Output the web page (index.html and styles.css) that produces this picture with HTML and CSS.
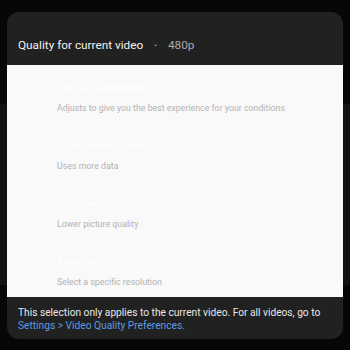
FILE: index.html
```html
<!DOCTYPE html>
<html>
<head>
<meta charset="utf-8">
<link rel="stylesheet" href="styles.css">
</head>
<body>
<div class="dialog">
  <div class="header">
    <span class="title">Quality for current video</span>
    <span class="dot">•</span>
    <span class="current">480p</span>
  </div>
  <div class="list">
    <div class="row">
      <span class="radio"></span>
      <div class="texts">
        <div class="opt">Auto (recommended)</div>
        <div class="sub">Adjusts to give you the best experience for your conditions</div>
      </div>
    </div>
    <div class="row">
      <span class="radio"></span>
      <div class="texts">
        <div class="opt">Higher picture quality</div>
        <div class="sub">Uses more data</div>
      </div>
    </div>
    <div class="row">
      <span class="radio"></span>
      <div class="texts">
        <div class="opt">Data saver</div>
        <div class="sub">Lower picture quality</div>
      </div>
    </div>
    <div class="row">
      <span class="radio"></span>
      <div class="texts">
        <div class="opt">Advanced</div>
        <div class="sub">Select a specific resolution</div>
      </div>
    </div>
  </div>
  <div class="footer">
    <div>This selection only applies to the current video. For all videos, go to</div>
    <div class="link">Settings &gt; Video Quality Preferences.</div>
  </div>
</div>
</body>
</html>
```

FILE: styles.css
```css
html {
  background: #070707;
}
html, body {
  margin: 0;
  padding: 0;
  font-family: Roboto, "Liberation Sans", sans-serif;
}
body {
  padding: 12px 7px 10px;
  background: linear-gradient(to bottom, #070707 0, #070707 104px, #121212 104px, #121212 285px, #070707 285px);
}
.dialog {
  background: #212121;
  border-radius: 12px;
  overflow: hidden;
}
.header {
  height: 53px;
  box-sizing: border-box;
  padding: 26px 11px 0;
  display: flex;
  align-items: flex-start;
  font-size: 11.8px;
  line-height: 15px;
  color: #f1f1f1;
}
.dot {
  margin-left: 11px;
  color: #aaaaaa;
  font-size: 8px;
}
.current {
  margin-left: 11px;
  color: #aaaaaa;
}
.list {
  background: #f9f9f9;
}
.row {
  height: 58px;
  box-sizing: border-box;
  padding-top: 13px;
  display: flex;
}
.radio {
  width: 13px;
  height: 13px;
  border: 2px solid #fbfbfb;
  border-radius: 50%;
  margin: 4px 0 0 20px;
  box-sizing: border-box;
}
.texts {
  margin-left: 17px;
}
.opt {
  font-size: 9.5px;
  line-height: 20px;
  color: #ffffff;
}
.sub {
  font-size: 8.8px;
  line-height: 20px;
  color: #b3b3b3;
}
.footer {
  padding: 9px 11px 7px;
  font-size: 10.2px;
  line-height: 13px;
  color: #e8e8e8;
}
.link {
  color: #5d9be0;
}
```
